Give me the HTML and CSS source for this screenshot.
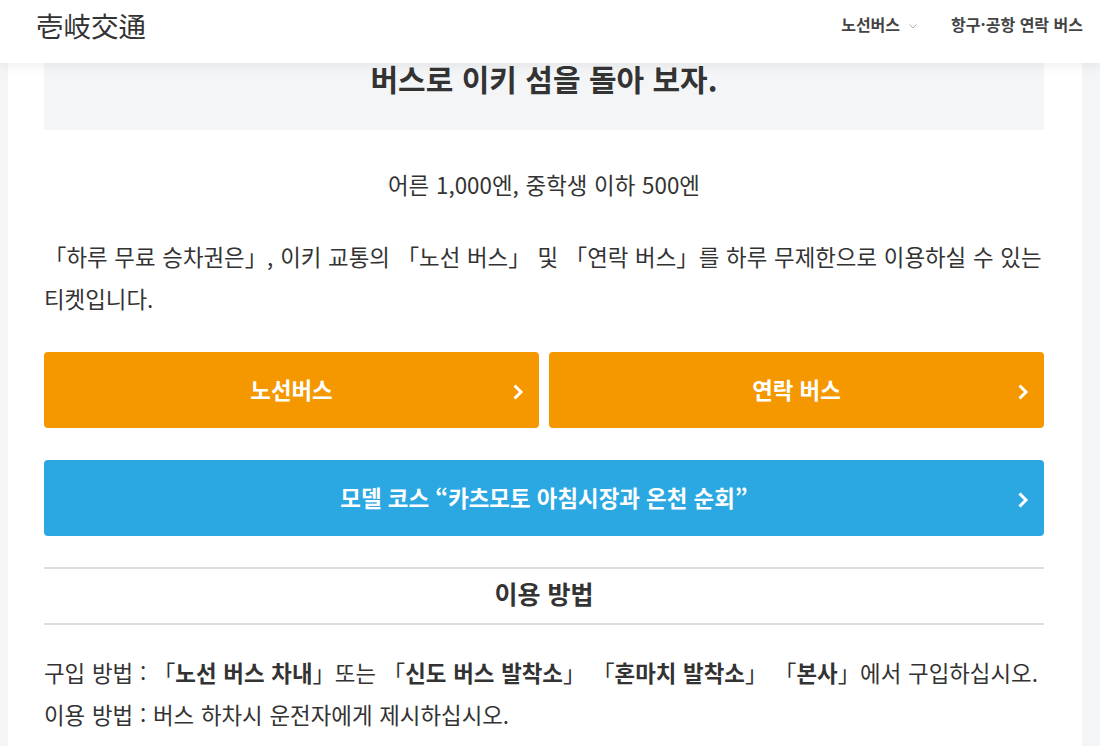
FILE: index.html
```html
<!DOCTYPE html>
<html lang="ko">
<head>
<meta charset="utf-8">
<title>壱岐交通</title>
<link rel="stylesheet" href="styles.css">
</head>
<body>
<header class="site-header">
  <div class="logo">壱岐交通</div>
  <nav class="nav">
    <a class="nav-item">노선버스<svg class="nav-caret" width="8" height="5" viewBox="0 0 8 5"><path d="M.5.5 4 4 7.500.5" fill="none" stroke="#999" stroke-width=".8"/></svg></a>
    <a class="nav-item">항구·공항 연락 버스</a>
  </nav>
</header>
<main class="page">
  <div class="hero"><h1 class="hero-title">버스로 이키 섬을 돌아 보자.</h1></div>
  <p class="price">어른 1,000엔, 중학생 이하 500엔</p>
  <p class="intro">「하루 무료 승차권은」, 이키 교통의 「노선 버스」 및 「연락 버스」를 하루 무제한으로 이용하실 수 있는 티켓입니다.</p>
  <div class="btn-row">
    <a class="btn btn-orange">노선버스<svg class="chev" width="14" height="18" viewBox="0 0 14 18"><path d="M3.500 2.500 10 9l-6.500 6.500" fill="none" stroke="#fff" stroke-width="3"/></svg></a>
    <a class="btn btn-orange">연락 버스<svg class="chev" width="14" height="18" viewBox="0 0 14 18"><path d="M3.500 2.500 10 9l-6.500 6.500" fill="none" stroke="#fff" stroke-width="3"/></svg></a>
  </div>
  <a class="btn btn-blue">모델 코스 “카츠모토 아침시장과 온천 순회”<svg class="chev" width="14" height="18" viewBox="0 0 14 18"><path d="M3.500 2.500 10 9l-6.500 6.500" fill="none" stroke="#fff" stroke-width="3"/></svg></a>
  <h2 class="section-title">이용 방법</h2>
  <p class="usage">구입 방법 : 「<b>노선 버스 차내</b>」또는 「<b>신도 버스 발착소</b>」 「<b>혼마치 발착소</b>」 「<b>본사</b>」에서 구입하십시오.<br>이용 방법 : 버스 하차시 운전자에게 제시하십시오.</p>
</main>
</body>
</html>
```
FILE: styles.css
```css
* { box-sizing: border-box; }
html, body { margin: 0; height: 746px; overflow: hidden; }
body {
  background: #f4f5f7;
  color: #333;
  font-family: "Noto Sans CJK KR", sans-serif;
  font-size: 22.4px;
  font-weight: 400;
  line-height: 42px;
  word-spacing: .5px;
}
.site-header {
  position: absolute;
  top: 0; left: 0; right: 0;
  height: 63px;
  z-index: 2;
  background: #fff;
  box-shadow: 0 2px 12px rgba(0,0,0,.08);
  display: flex;
  justify-content: space-between;
  padding: 0 17px 0 36px;
}
.logo {
  font-family: "Noto Sans CJK JP", sans-serif;
  font-size: 27.5px;
  line-height: 50px;
  font-weight: 400;
  word-spacing: 0;
}
.nav { display: flex; gap: 34px; }
.nav-item {
  font-size: 16px;
  font-weight: 700;
  line-height: 49px;
  color: #444;
  word-spacing: 0;
}
.nav-caret { margin-left: 9px; vertical-align: 2px; }
.page {
  width: 1074px;
  height: 746px;
  margin-left: 8px;
  padding: 0 38px 0 36px;
  background: #fff;
  overflow: hidden;
}
.hero {
  height: 130px;
  background: #f4f5f7;
  border-radius: 3px;
  padding-top: 56px;
  text-align: center;
}
.hero-title {
  margin: 0;
  font-size: 30px;
  line-height: 44px;
  font-weight: 700;
  word-spacing: 0;
}
.price { margin: 33px 0 0; text-align: center; }
.intro { margin: 30px 0 0; }
.btn-row { display: flex; gap: 10px; margin-top: 33px; }
.btn {
  position: relative;
  display: block;
  flex: 1;
  height: 76px;
  border-radius: 4px;
  color: #fff;
  font-size: 22.4px;
  font-weight: 700;
  line-height: 74px;
  text-align: center;
  word-spacing: 0;
}
.btn-orange { background: #f59800; }
.btn-blue { background: #2ba8e2; margin-top: 32px; }
.chev { position: absolute; right: 14px; top: 31px; }
.section-title {
  margin: 31px 0 0;
  height: 58px;
  border-top: 2px solid #ddd;
  border-bottom: 2px solid #ddd;
  font-size: 25px;
  font-weight: 700;
  line-height: 49px;
  text-align: center;
  word-spacing: 0;
}
.usage { margin: 26px 0 0; }
.usage b { font-weight: 700; }
```
